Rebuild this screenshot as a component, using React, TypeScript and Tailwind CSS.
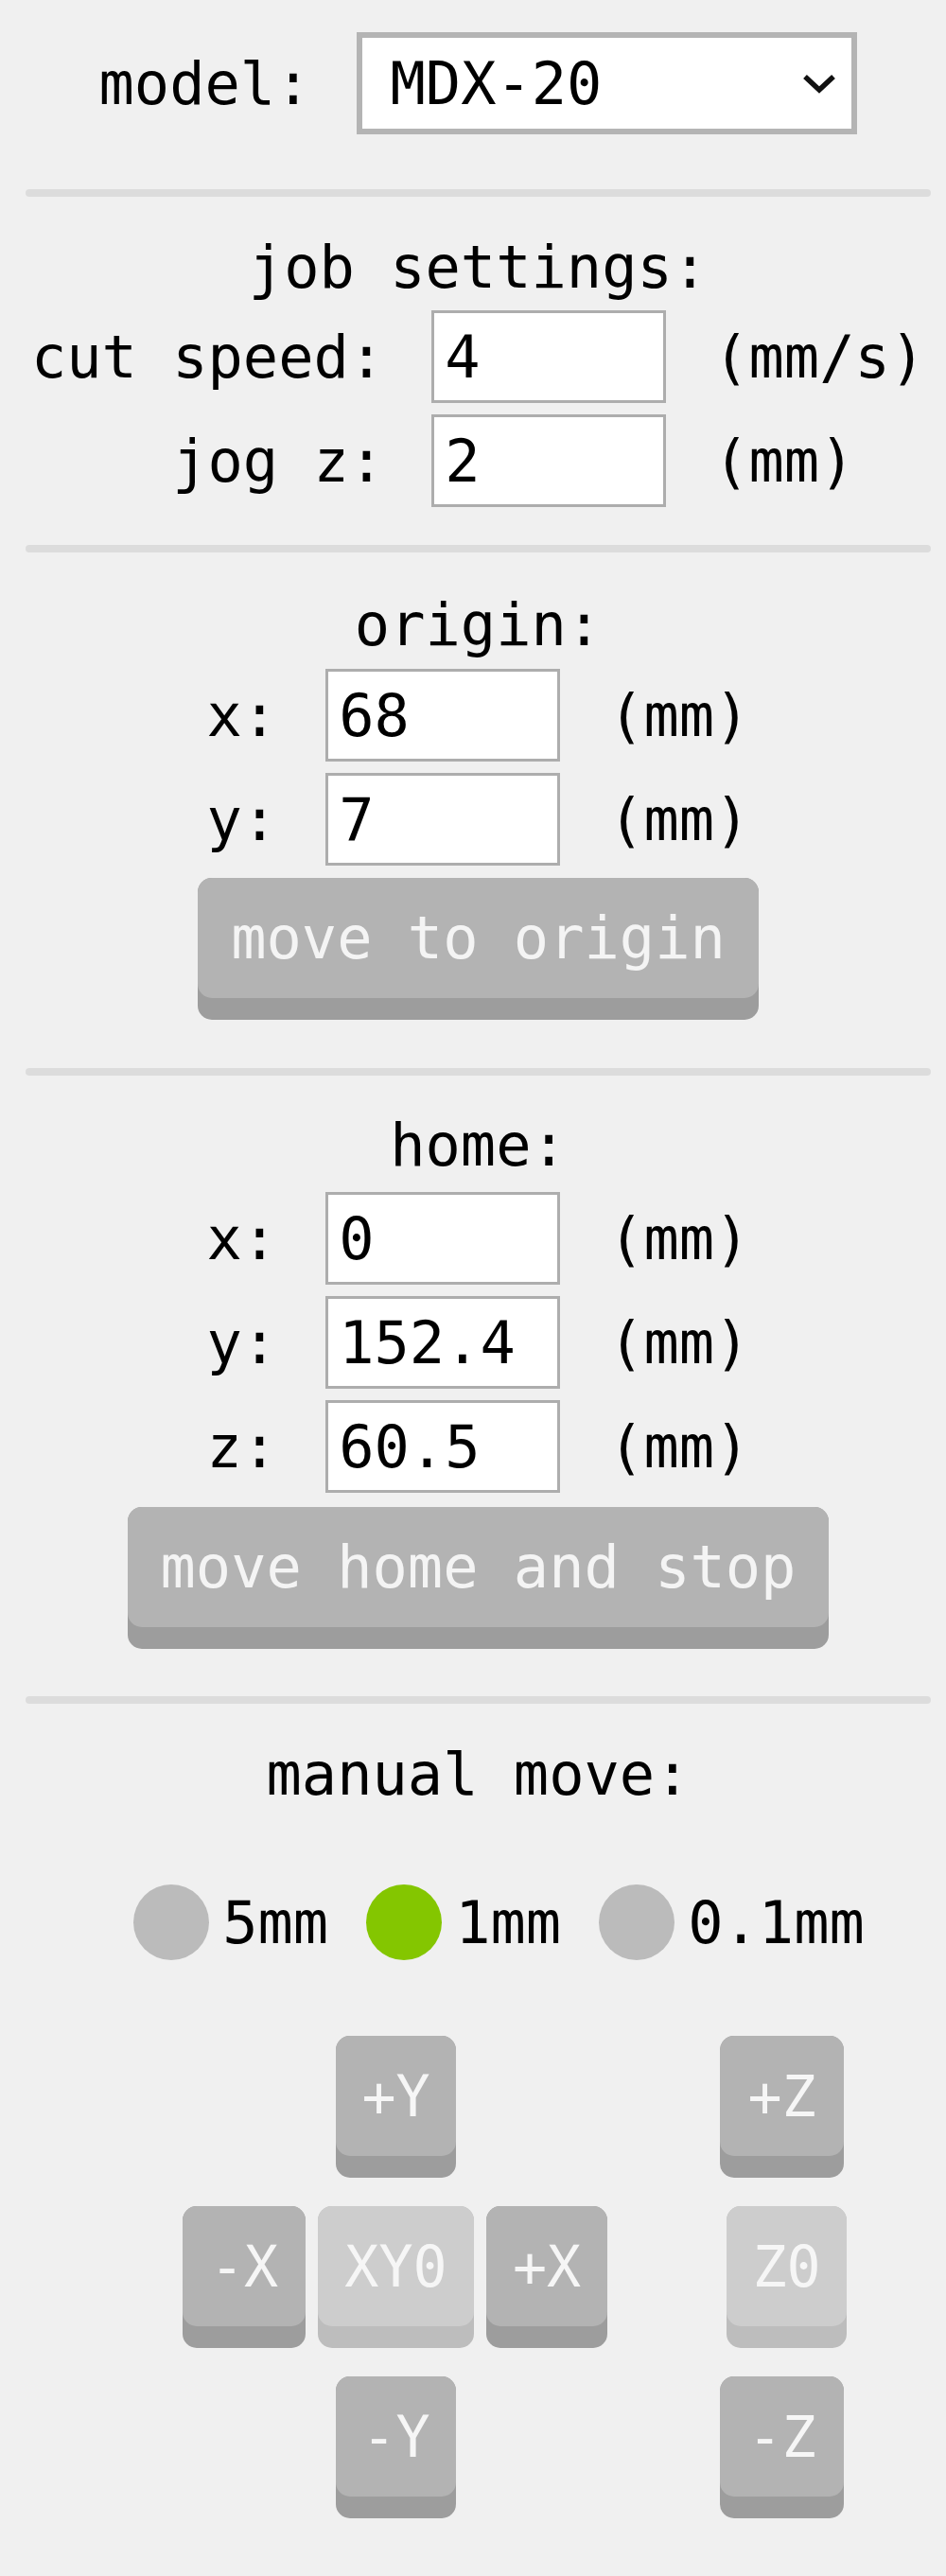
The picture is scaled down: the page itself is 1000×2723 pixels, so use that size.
import React from 'react';

const mono = "font-['DejaVu_Sans_Mono','Liberation_Mono',monospace]";

function Divider({ className }: { className: string }) {
  return <div className={`h-[8px] rounded-full bg-[#dcdcdc] ${className}`} />;
}

function Field({ value }: { value: string }) {
  return (
    <input
      defaultValue={value}
      className="h-[98px] w-[248px] border-[3px] border-[#adadad] bg-white pl-[11px] text-[62px] leading-none text-black outline-none"
    />
  );
}

function Row({ label, value, unit }: { label: string; value: string; unit: string }) {
  return (
    <>
      <span className="justify-self-end">{label}</span>
      <Field value={value} />
      <span className="justify-self-start">{unit}</span>
    </>
  );
}

function KeyButton({ label, light, className = '' }: { label: string; light?: boolean; className?: string }) {
  return (
    <div className={`rounded-[15px] pb-[23px] ${light ? 'bg-[#bdbdbd]' : 'bg-[#9d9d9d]'} ${className}`}>
      <div
        className={`flex h-[127px] items-center justify-center rounded-[15px] text-[60px] text-[#f6f6f6] ${
          light ? 'bg-[#cdcdcd]' : 'bg-[#b3b3b3]'
        }`}
      >
        {label}
      </div>
    </div>
  );
}

function WideButton({ label }: { label: string }) {
  return (
    <div className="inline-block rounded-[15px] bg-[#9d9d9d] pb-[23px]">
      <div className="flex h-[127px] items-center rounded-[15px] bg-[#b3b3b3] px-[35px] text-[62px] text-[#f4f4f4]">
        {label}
      </div>
    </div>
  );
}

function Radio({ label, active }: { label: string; active?: boolean }) {
  return (
    <div className="flex items-center gap-[14px]">
      <div className={`h-[80px] w-[80px] rounded-full ${active ? 'bg-[#84c600]' : 'bg-[#bbbbbb]'}`} />
      <span>{label}</span>
    </div>
  );
}

export default function App() {
  return (
    <div className={`min-h-[2723px] bg-[#f0f0f0] text-[62px] text-black ${mono}`}>
      <div className="ml-[27px] w-[957px] pt-[34px]">
        {/* model */}
        <div className="flex h-[108px] items-center justify-center gap-[49px]">
          <span>model:</span>
          <div className="flex h-[108px] w-[529px] items-center justify-between border-[6px] border-[#b4b4b4] bg-white pl-[29px] pr-[14px]">
            <span>MDX-20</span>
            <svg width="40" height="24" viewBox="0 0 40 24">
              <polyline points="5,5 20,19 35,5" fill="none" stroke="#111" strokeWidth="5.5" />
            </svg>
          </div>
        </div>

        <Divider className="mt-[58px]" />

        {/* job settings */}
        <div className="mt-[39px] text-center leading-[72px]">job settings:</div>
        <div className="mt-[9px] grid grid-cols-[auto_248px_auto] items-center justify-center gap-x-[50px] gap-y-[12px]">
          <Row label="cut speed:" value="4" unit="(mm/s)" />
          <Row label="jog z:" value="2" unit="(mm)" />
        </div>

        <Divider className="mt-[40px]" />

        {/* origin */}
        <div className="mt-[41px] text-center leading-[72px]">origin:</div>
        <div className="mt-[10px] grid grid-cols-[auto_248px_auto] items-center justify-center gap-x-[51px] gap-y-[12px]">
          <Row label="x:" value="68" unit="(mm)" />
          <Row label="y:" value="7" unit="(mm)" />
        </div>
        <div className="mt-[13px] text-center">
          <WideButton label="move to origin" />
        </div>

        <Divider className="mt-[51px]" />

        {/* home */}
        <div className="mt-[38px] text-center leading-[72px]">home:</div>
        <div className="mt-[13px] grid grid-cols-[auto_248px_auto] items-center justify-center gap-x-[51px] gap-y-[12px]">
          <Row label="x:" value="0" unit="(mm)" />
          <Row label="y:" value="152.4" unit="(mm)" />
          <Row label="z:" value="60.5" unit="(mm)" />
        </div>
        <div className="mt-[15px] text-center">
          <WideButton label="move home and stop" />
        </div>

        <Divider className="mt-[50px]" />

        {/* manual move */}
        <div className="mt-[39px] text-center leading-[72px]">manual move:</div>
        <div className="mt-[80px] flex h-[80px] items-center justify-center gap-[40px] pl-[44px]">
          <Radio label="5mm" />
          <Radio label="1mm" active />
          <Radio label="0.1mm" />
        </div>

        <div className="ml-[166px] mt-[80px] flex gap-[118px]">
          <div className="grid grid-cols-[130px_165px_128px] gap-x-[13px] gap-y-[30px]">
            <div />
            <KeyButton label="+Y" className="w-[127px] justify-self-center" />
            <div />
            <KeyButton label="-X" />
            <KeyButton label="XY0" light />
            <KeyButton label="+X" />
            <div />
            <KeyButton label="-Y" className="w-[127px] justify-self-center" />
            <div />
          </div>
          <div className="flex w-[133px] flex-col items-center gap-[30px]">
            <KeyButton label="+Z" className="w-[131px]" />
            <KeyButton label="Z0" light className="ml-[10px] w-[127px]" />
            <KeyButton label="-Z" className="w-[131px]" />
          </div>
        </div>
      </div>
    </div>
  );
}
